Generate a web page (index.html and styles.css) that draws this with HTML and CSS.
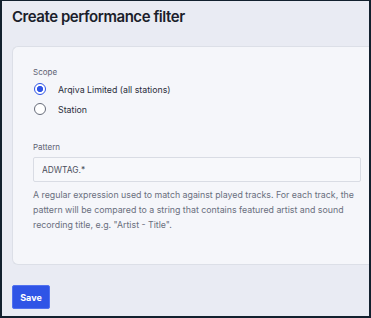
FILE: index.html
```html
<!DOCTYPE html>
<html lang="en">
<head>
    <meta charset="UTF-8">
    <meta name="viewport" content="width=device-width, initial-scale=1.0">
    <title>Create performance filter</title>
    <link rel="stylesheet" href="styles.css">
</head>
<body>

    <div class="page">
        <h2 class="title">Create performance filter</h2>

        <form class="card">
            <div class="field">
                <span class="field-label">Scope</span>
                <label class="radio"><input type="radio" name="scope" checked> Arqiva Limited (all stations)</label>
                <label class="radio"><input type="radio" name="scope"> Station</label>
            </div>

            <div class="field pattern">
                <label class="field-label" for="pattern">Pattern</label>
                <input type="text" id="pattern" value="ADWTAG.*">
                <p class="help">A regular expression used to match against played tracks. For each track, the pattern will be compared to a string that contains featured artist and sound recording title, e.g. "Artist - Title".</p>
            </div>
        </form>

        <button class="btn save">Save</button>
    </div>

</body>
</html>
```

FILE: styles.css
```css
/* General Styles */
html, body {
    margin: 0;
    height: 100%;
}

body {
    font-family: Inter, 'Noto Sans', sans-serif;
    background: #12202e;
}

.page {
    box-sizing: border-box;
    height: 318px;
    overflow: hidden;
    background: #e9ebf3;
    border: 2px solid #12202e;
    border-top-width: 1px;
    padding: 6px 0 0 10px;
}

.title {
    margin: 0;
    font-size: 15px;
    line-height: 20px;
    font-weight: 600;
    letter-spacing: -0.45px;
    color: #1b1e2b;
}

.card {
    margin-top: 19px;
    background: #f5f6fa;
    border: 1px solid #dcdfe7;
    border-right: none;
    border-radius: 6px 0 0 6px;
    padding: 19px 8px 0 20px;
    height: 219px;
    box-sizing: border-box;
}

.field-label {
    display: block;
    font-size: 8px;
    line-height: 12px;
    color: #5d6272;
    margin-bottom: 1px;
}

.radio {
    display: flex;
    align-items: center;
    gap: 12px;
    height: 20px;
    font-size: 8.8px;
    color: #2b2e3a;
}

.radio input {
    appearance: none;
    margin: 0 0 0 1px;
    width: 12px;
    height: 12px;
    border: 1.5px solid #676c7a;
    border-radius: 50%;
    box-sizing: border-box;
    background: #fff;
}

.radio input:checked {
    border-color: #2f54e6;
    background: radial-gradient(circle, #2f54e6 0 2.8px, #fff 3.3px);
}

.pattern {
    margin-top: 22px;
}

.pattern .field-label {
    margin-bottom: 4px;
}

input[type="text"] {
    display: block;
    box-sizing: border-box;
    width: 328px;
    height: 25px;
    padding: 0 8px;
    border: 1px solid #d9dce4;
    border-radius: 2px;
    background: #f7f8fb;
    font-family: inherit;
    font-size: 8.4px;
    color: #4a4e5c;
    outline: none;
}

.help {
    margin: 5px 0 0;
    font-size: 8.8px;
    line-height: 15px;
    color: #6a6f7e;
    width: 330px;
}

.btn {
    margin-top: 20px;
    width: 38px;
    height: 24px;
    padding: 0;
    border: 1px solid #5272f0;
    border-radius: 2px;
    background: #2f54e6;
    color: white;
    font-family: inherit;
    font-size: 9px;
    font-weight: 700;
    cursor: pointer;
}
```
